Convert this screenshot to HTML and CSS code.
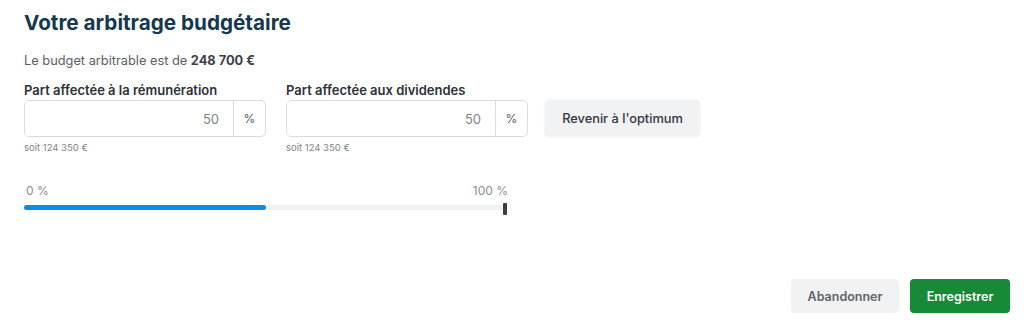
FILE: index.html
```html
<!DOCTYPE html>
<html lang="fr">
<head>
  <meta charset="UTF-8">
  <title>Votre arbitrage budgétaire</title>
  <link rel="stylesheet" href="styles.css">
</head>
<body>
  <div class="page">
    <h1>Votre arbitrage budgétaire</h1>
    <p class="budget">Le budget arbitrable est de <strong>248 700 €</strong></p>

    <div class="fields">
      <div class="field">
        <label for="remu">Part affectée à la rémunération</label>
        <div class="input-group">
          <input type="text" id="remu" value="50">
          <span class="suffix">%</span>
        </div>
        <p class="hint">soit 124 350 €</p>
      </div>

      <div class="field">
        <label for="divi">Part affectée aux dividendes</label>
        <div class="input-group">
          <input type="text" id="divi" value="50">
          <span class="suffix">%</span>
        </div>
        <p class="hint">soit 124 350 €</p>
      </div>

      <button class="btn-optimum">Revenir à l'optimum</button>
    </div>

    <div class="slider">
      <div class="slider-labels">
        <span>0 %</span>
        <span>100 %</span>
      </div>
      <div class="track">
        <div class="fill" style="width: 50%"></div>
        <div class="thumb"></div>
      </div>
    </div>

    <footer class="actions">
      <button class="btn-cancel">Abandonner</button>
      <button class="btn-save">Enregistrer</button>
    </footer>
  </div>
</body>
</html>
```

FILE: styles.css
```css
* { box-sizing: border-box; }
html, body { margin: 0; height: 100%; }
body {
  font-family: Inter, "Liberation Sans", sans-serif;
  background-color: #fff;
  color: #333;
}
.page {
  min-height: 100%;
  display: flex;
  flex-direction: column;
  padding: 10px 14px 9px 24px;
}
h1 {
  margin: 0;
  font-size: 20.7px;
  font-weight: 700;
  color: #15384f;
  line-height: 26px;
}
.budget {
  margin: 17px 0 0;
  font-size: 12.8px;
  line-height: 16px;
  color: #5b5e66;
}
.budget strong { color: #3d4048; }
.fields {
  display: flex;
  align-items: flex-start;
  gap: 20px;
  margin-top: 13px;
}
.field { width: 242px; }
.field label {
  display: block;
  font-size: 13px;
  font-weight: 600;
  color: #2e3138;
  line-height: 16px;
  margin-bottom: 2px;
}
.input-group {
  display: flex;
  height: 37px;
  border: 1px solid #d9dbe0;
  border-radius: 5px;
  overflow: hidden;
}
.input-group input {
  flex: 1;
  min-width: 0;
  border: 0;
  outline: none;
  padding: 0 14px;
  text-align: right;
  font-family: inherit;
  font-size: 13px;
  color: #80838a;
}
.suffix {
  width: 32px;
  border-left: 1px solid #d9dbe0;
  display: flex;
  align-items: center;
  justify-content: center;
  font-size: 12px;
  color: #555860;
}
.hint {
  margin: 5px 0 0;
  font-size: 9.5px;
  color: #80838a;
  line-height: 12px;
}
.btn-optimum {
  margin-top: 18px;
  margin-left: -3px;
  width: 155px;
  height: 37px;
  border: 0;
  border-radius: 5px;
  background-color: #f1f2f4;
  box-shadow: 0 0 2px rgba(0, 0, 0, 0.12);
  font-family: inherit;
  font-size: 12.8px;
  font-weight: 500;
  color: #34373e;
}
.slider {
  width: 484px;
  margin-top: 30px;
}
.slider-labels {
  display: flex;
  justify-content: space-between;
  font-size: 12px;
  color: #8a8d94;
  line-height: 14px;
  padding-left: 2px;
}
.track {
  position: relative;
  height: 5px;
  margin-top: 7px;
  width: 483px;
  border-radius: 3px;
  background-color: #eff0f2;
}
.fill {
  height: 100%;
  border-radius: 3px;
  background-color: #0b8ceb;
}
.thumb {
  position: absolute;
  right: 0;
  top: -2px;
  width: 4px;
  height: 12px;
  border-radius: 1px;
  background-color: #3b3e48;
}
.actions {
  margin-top: auto;
  display: flex;
  justify-content: flex-end;
  gap: 11px;
}
.actions button {
  height: 34px;
  border: 0;
  border-radius: 4px;
  font-family: inherit;
  font-size: 12.5px;
  font-weight: 600;
}
.btn-cancel {
  width: 108px;
  background-color: #f1f2f4;
  color: #60636b;
}
.btn-save {
  width: 100px;
  background-color: #178a38;
  color: #fff;
}
```
